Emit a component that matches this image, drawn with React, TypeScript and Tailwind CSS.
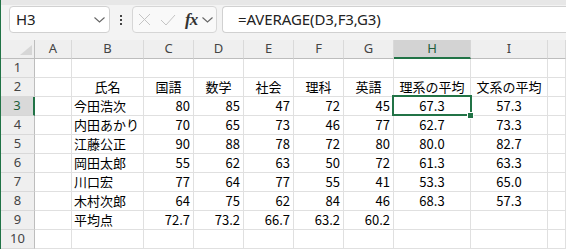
import React from "react";

const COLS = ["A", "B", "C", "D", "E", "F", "G", "H", "I", ""];

type Cell = { v: string; align?: "l" | "r" | "c" };

const ROWS: Cell[][] = [
  [],
  [
    { v: "" },
    { v: "氏名", align: "c" },
    { v: "国語", align: "c" },
    { v: "数学", align: "c" },
    { v: "社会", align: "c" },
    { v: "理科", align: "c" },
    { v: "英語", align: "c" },
    { v: "理系の平均", align: "c" },
    { v: "文系の平均", align: "c" },
  ],
];

const DATA: [string, number[], string, string][] = [
  ["今田浩次", [80, 85, 47, 72, 45], "67.3", "57.3"],
  ["内田あかり", [70, 65, 73, 46, 77], "62.7", "73.3"],
  ["江藤公正", [90, 88, 78, 72, 80], "80.0", "82.7"],
  ["岡田太郎", [55, 62, 63, 50, 72], "61.3", "63.3"],
  ["川口宏", [77, 64, 77, 55, 41], "53.3", "65.0"],
  ["木村次郎", [64, 75, 62, 84, 46], "68.3", "57.3"],
];

DATA.forEach(([name, nums, h, i]) => {
  ROWS.push([
    { v: "" },
    { v: name, align: "l" },
    ...nums.map((n) => ({ v: String(n), align: "r" as const })),
    { v: h, align: "c" },
    { v: i, align: "c" },
  ]);
});
ROWS.push([
  { v: "" },
  { v: "平均点", align: "l" },
  ...["72.7", "73.2", "66.7", "63.2", "60.2"].map((v) => ({ v, align: "r" as const })),
]);
ROWS.push([]);

function Chevron() {
  return (
    <svg width="11" height="6" viewBox="0 0 11 6" fill="none">
      <path d="M0.5 0.5 L5.5 5 L10.5 0.5" stroke="#666" strokeWidth="1.1" />
    </svg>
  );
}

export default function App() {
  return (
    <div className="w-[566px] h-[249px] overflow-hidden border-l border-[#217346] bg-white font-['Noto_Sans_CJK_JP',sans-serif]">
      {/* formula bar */}
      <div className="h-[40px] bg-[#f3f3f3] flex flex-col">
        <div className="h-[5px] bg-[#e7e7e7]" />
        <div className="flex items-start pt-[1px] pl-[8px]">
          <div className="w-[101px] h-[27px] rounded-[4px] border border-[#d1d1d1] bg-white flex items-center justify-between pl-[6px] pr-[4px]">
            <span className="text-[15px] text-[#222] font-['Noto_Sans',sans-serif]">H3</span>
            <Chevron />
          </div>
          <div className="w-[22px] h-[27px] flex flex-col items-center justify-center gap-[2px]">
            <span className="w-[2px] h-[2px] bg-[#444]" />
            <span className="w-[2px] h-[2px] bg-[#444]" />
            <span className="w-[2px] h-[2px] bg-[#444]" />
          </div>
          <div className="w-[85px] h-[27px] rounded-[4px] border border-[#d6d6d6] bg-[#f9f9f9] flex items-center pl-[5px]">
            <svg width="13" height="13" viewBox="0 0 13 13">
              <path d="M1 1 L12 12 M12 1 L1 12" stroke="#c4c4c4" strokeWidth="1" />
            </svg>
            <svg width="16" height="12" viewBox="0 0 16 12" className="ml-[9px]">
              <path d="M1 6 L6 11 L15 1" stroke="#c4c4c4" strokeWidth="1" fill="none" />
            </svg>
            <span className="ml-[9px] text-[17px] leading-none italic font-bold font-['Liberation_Serif',serif] text-[#333] tracking-[-1px]">
              fx
            </span>
            <span className="ml-[5px]">
              <Chevron />
            </span>
          </div>
          <div className="ml-[5px] flex-1 h-[27px] rounded-l-[4px] border border-r-0 border-[#d1d1d1] bg-white flex items-center pl-[15px]">
            <span className="text-[15px] text-[#222] font-['Noto_Sans',sans-serif] tracking-[-0.1px]">
              =AVERAGE(D3,F3,G3)
            </span>
          </div>
        </div>
      </div>

      {/* sheet */}
      <div className="grid grid-cols-[34px_37px_72px_50px_50px_50px_50px_50px_77px_77px_1fr] auto-rows-[19px]">
        {/* corner */}
        <div className="bg-[#efefef] border-r border-b border-[#bdbdbd] flex items-end justify-end pr-[2px] pb-[3px]">
          <svg width="12" height="10" viewBox="0 0 12 10">
            <path d="M12 0 L12 10 L0 10 Z" fill="#d6d6d6" />
          </svg>
        </div>
        {COLS.map((c, i) =>
          c === "H" ? (
            <div
              key={i}
              className="bg-[#d3d3d3] border-r border-b-2 border-r-[#d6d6d6] border-b-[#217346] flex items-center justify-center text-[13px] text-[#1e5e3b] font-['Noto_Sans',sans-serif]"
            >
              {c}
            </div>
          ) : (
            <div
              key={i}
              className="bg-[#efefef] border-r border-b border-r-[#d9d9d9] border-b-[#bdbdbd] flex items-center justify-center text-[13px] text-[#444] font-['Noto_Sans',sans-serif]"
            >
              {c}
            </div>
          )
        )}

        {ROWS.map((row, r) => {
          const rowNum = r + 1;
          const sel = rowNum === 3;
          return (
            <React.Fragment key={r}>
              <div
                className={
                  sel
                    ? "bg-[#d9d9d9] border-b border-r-2 border-b-[#d6d6d6] border-r-[#217346] flex items-center justify-center text-[13px] text-[#1e5e3b] font-['Noto_Sans',sans-serif]"
                    : "bg-[#efefef] border-b border-r border-b-[#d9d9d9] border-r-[#bdbdbd] flex items-center justify-center text-[13px] text-[#444] font-['Noto_Sans',sans-serif]"
                }
              >
                {rowNum}
              </div>
              {COLS.map((_, c) => {
                const cell = row[c];
                const align =
                  cell?.align === "r"
                    ? "justify-end pr-[3px]"
                    : cell?.align === "c"
                    ? "justify-center"
                    : "justify-start pl-[2px]";
                const isSel = sel && c === 7;
                return (
                  <div
                    key={c}
                    className={`relative border-r border-b border-[#e0e0e0] flex items-center whitespace-nowrap text-[13px] text-black ${align} ${isSel ? "z-10" : ""}`}
                  >
                    {cell?.v}
                    {isSel && (
                      <>
                        <div className="absolute -left-[2px] -top-[2px] -right-[2px] -bottom-[1px] border-2 border-[#217346]" />
                        <div className="absolute -right-[4px] -bottom-[4px] w-[7px] h-[7px] bg-[#217346] border border-white" />
                      </>
                    )}
                  </div>
                );
              })}
            </React.Fragment>
          );
        })}
      </div>
    </div>
  );
}
